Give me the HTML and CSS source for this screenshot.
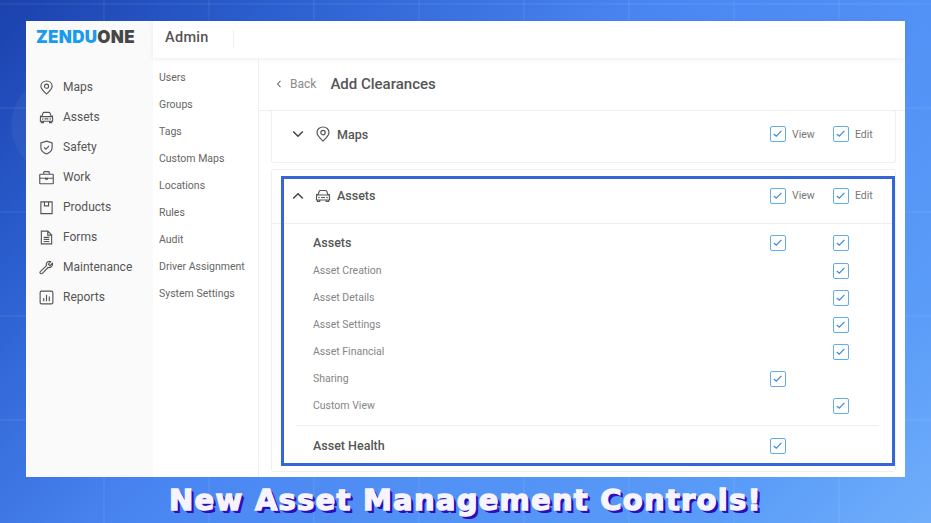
FILE: index.html
```html
<!DOCTYPE html>
<html lang="en">
<head>
<meta charset="utf-8">
<title>New Asset Management Controls</title>
<link rel="stylesheet" href="styles.css">
</head>
<body>
<svg class="defs" width="0" height="0" aria-hidden="true">
  <symbol id="chk" viewBox="0 0 16 16"><path d="M3.500 8.600 6.500 11.400 12.800 4.800" fill="none" stroke="#3a8ae0" stroke-width="1.500"/></symbol>
  <symbol id="pin" viewBox="0 0 16 16"><path d="M8 15C5.5 12.6 2 9.8 2 6.6 2 3.3 4.7 1 8 1s6 2.3 6 5.6C14 9.8 10.5 12.6 8 15Z" fill="none" stroke="#555" stroke-width="1.2"/><circle cx="8" cy="6.6" r="2.2" fill="none" stroke="#555" stroke-width="1.2"/></symbol>
  <symbol id="car" viewBox="0 0 16 16"><path d="M3 7 4.2 3.4C4.4 2.8 4.9 2.5 5.5 2.5h5c.6 0 1.1.3 1.3.9L13 7M2.6 7h10.8c.6 0 1.1.5 1.1 1.1V12h-13V8.1C1.500 7.500 2 7 2.600 7ZM2.500 12v1.500h2.200V12M11.300 12v1.500h2.200V12M1 6.500h1.500M13.500 6.500H15M6 9.500h4" fill="none" stroke="#555" stroke-width="1.200"/><circle cx="4" cy="9.500" r=".8" fill="#555"/><circle cx="12" cy="9.500" r=".8" fill="#555"/></symbol>
</svg>

<div class="app">
  <aside class="sidebar">
    <div class="logo"><span class="logo-blue">ZENDU</span><span class="logo-gray">ONE</span></div>
    <nav class="nav">
      <a class="nav-item"><svg class="nav-icon" viewBox="0 0 16 16"><use href="#pin"/></svg>Maps</a>
      <a class="nav-item"><svg class="nav-icon" viewBox="0 0 16 16"><use href="#car"/></svg>Assets</a>
      <a class="nav-item"><svg class="nav-icon" viewBox="0 0 16 16"><path d="M8 1.200 14 3.200V8c0 3.200-2.600 5.600-6 6.900C4.600 13.600 2 11.200 2 8V3.200Z" fill="none" stroke="#555" stroke-width="1.200"/><path d="M5.500 8 7.400 9.800 10.700 6.300" fill="none" stroke="#555" stroke-width="1.200"/></svg>Safety</a>
      <a class="nav-item"><svg class="nav-icon" viewBox="0 0 16 16"><path d="M1.500 4.500h13a.7.7 0 0 1 .7.700V14a.7.700 0 0 1-.7.700h-13a.7.700 0 0 1-.7-.700V5.200a.7.700 0 0 1 .7-.700ZM.8 8.800h14.400M5 4.500V2.600c0-.5.400-.9.900-.9h4.200c.5 0 .9.400.9.900v1.900M7 8v1.800h2V8" fill="none" stroke="#555" stroke-width="1.200"/></svg>Work</a>
      <a class="nav-item"><svg class="nav-icon" viewBox="0 0 16 16"><path d="M2 2h12v12.500H2ZM5.800 2v4.200h4.400V2" fill="none" stroke="#555" stroke-width="1.200"/></svg>Products</a>
      <a class="nav-item"><svg class="nav-icon" viewBox="0 0 16 16"><path d="M2.500 1.200h7L13.500 5.200v9.600h-11ZM9.300 1.200v4.200h4.200M5 7.800h6M5 10h6M5 12.200h6" fill="none" stroke="#555" stroke-width="1.200"/></svg>Forms</a>
      <a class="nav-item"><svg class="nav-icon" viewBox="0 0 16 16"><path d="M14.300 3.500 11.600 6 10 4.400 12.500 1.800C10.500 1 8.200 2 7.800 4.100c-.1.700-.1 1.300.2 1.900L1.600 12.100c-.7.700-.7 1.500-.1 2.100.6.600 1.400.6 2.100 0L9.700 8c2.500.7 5.300-1.400 4.600-4.500Z" fill="none" stroke="#555" stroke-width="1.200"/></svg>Maintenance</a>
      <a class="nav-item"><svg class="nav-icon" viewBox="0 0 16 16"><rect x="1.200" y="1.200" width="13.600" height="13.600" rx="1.500" fill="none" stroke="#555" stroke-width="1.200"/><path d="M5 8.500v3.500M8 5v7M11 7v5" stroke="#555" stroke-width="1.200"/></svg>Reports</a>
    </nav>
  </aside>

  <div class="content">
    <header class="topbar">
      <span class="topbar-title">Admin</span>
      <span class="topbar-sep"></span>
    </header>
    <div class="panes">
      <nav class="subnav">
        <a>Users</a><a>Groups</a><a>Tags</a><a>Custom Maps</a><a>Locations</a><a>Rules</a><a>Audit</a><a>Driver Assignment</a><a>System Settings</a>
      </nav>
      <main class="main">
        <div class="page-head">
          <svg class="back-icon" viewBox="0 0 8 10"><path d="M5.500 1.800 2.500 5 5.500 8.200" fill="none" stroke="#777" stroke-width="1.100"/></svg>
          <span class="back">Back</span>
          <h1 class="page-title">Add Clearances</h1>
        </div>
        <div class="cards">
          <section class="card card-maps">
            <div class="group-head">
              <div class="group-name">
                <svg class="chev" viewBox="0 0 12 8"><path d="M1.200 1.500 6 6.300 10.800 1.500" fill="none" stroke="#444" stroke-width="1.500"/></svg>
                <svg class="group-icon" viewBox="0 0 16 16"><use href="#pin"/></svg>
                <span>Maps</span>
              </div>
              <label class="perm"><span class="box"><svg viewBox="0 0 16 16"><use href="#chk"/></svg></span>View</label>
              <label class="perm"><span class="box"><svg viewBox="0 0 16 16"><use href="#chk"/></svg></span>Edit</label>
            </div>
          </section>

          <section class="card card-assets">
            <div class="group-head group-head-line">
              <div class="group-name">
                <svg class="chev" viewBox="0 0 12 8"><path d="M1.200 6.500 6 1.700 10.800 6.500" fill="none" stroke="#444" stroke-width="1.500"/></svg>
                <svg class="group-icon" viewBox="0 0 16 16"><use href="#car"/></svg>
                <span>Assets</span>
              </div>
              <label class="perm"><span class="box"><svg viewBox="0 0 16 16"><use href="#chk"/></svg></span>View</label>
              <label class="perm"><span class="box"><svg viewBox="0 0 16 16"><use href="#chk"/></svg></span>Edit</label>
            </div>
            <div class="rows">
              <div class="row row-main row-first"><span>Assets</span><span class="box"><svg viewBox="0 0 16 16"><use href="#chk"/></svg></span><span class="box"><svg viewBox="0 0 16 16"><use href="#chk"/></svg></span></div>
              <div class="row"><span>Asset Creation</span><i></i><span class="box"><svg viewBox="0 0 16 16"><use href="#chk"/></svg></span></div>
              <div class="row"><span>Asset Details</span><i></i><span class="box"><svg viewBox="0 0 16 16"><use href="#chk"/></svg></span></div>
              <div class="row"><span>Asset Settings</span><i></i><span class="box"><svg viewBox="0 0 16 16"><use href="#chk"/></svg></span></div>
              <div class="row"><span>Asset Financial</span><i></i><span class="box"><svg viewBox="0 0 16 16"><use href="#chk"/></svg></span></div>
              <div class="row"><span>Sharing</span><span class="box"><svg viewBox="0 0 16 16"><use href="#chk"/></svg></span><i></i></div>
              <div class="row"><span>Custom View</span><i></i><span class="box"><svg viewBox="0 0 16 16"><use href="#chk"/></svg></span></div>
              <div class="rows-line"></div>
              <div class="row row-main"><span>Asset Health</span><span class="box"><svg viewBox="0 0 16 16"><use href="#chk"/></svg></span><i></i></div>
            </div>
            <div class="highlight"></div>
          </section>
        </div>
      </main>
    </div>
  </div>
</div>

<div class="caption">New Asset Management Controls!</div>
</body>
</html>
```

FILE: styles.css
```css
* { box-sizing: border-box; }
html, body { margin: 0; height: 100%; }
body {
  width: 931px;
  height: 523px;
  overflow: hidden;
  font-family: Roboto, "Liberation Sans", sans-serif;
  color: #555;
  padding: 21px 26px 0;
  background:
    radial-gradient(circle at 62px 125px, rgba(255,255,255,.045) 0 50px, transparent 51px),
    repeating-linear-gradient(90deg, transparent 0 103px, rgba(255,255,255,.05) 103px 105px),
    repeating-linear-gradient(0deg, transparent 0 102px, rgba(255,255,255,.05) 102px 104px),
    linear-gradient(135deg, #1b41ad 0%, #2c60d0 20%, #4a86f2 45%, #5a9cf8 85%, #70aefb 100%);
}
.defs { position: absolute; }
.app { display: flex; width: 879px; height: 456px; background: #fff; }

.sidebar { width: 127px; flex: none; background: #fafafa; padding-left: 11px; }
.logo {
  height: 37px;
  display: flex;
  align-items: center;
  padding-bottom: 4px;
  margin-left: -1px;
  font-family: Inter, "Liberation Sans", sans-serif;
  font-weight: 900;
  font-size: 17px;
  letter-spacing: .3px;
  line-height: 1;
}
.logo-blue { color: #1b9bf0; }
.logo-gray { color: #474747; }
.nav { margin-top: 14px; display: flex; flex-direction: column; }
.nav-item {
  height: 30px;
  display: flex;
  align-items: center;
  gap: 9px;
  margin-left: 2px;
  font-size: 12px;
  color: #555;
}
.nav-icon { width: 15px; height: 15px; flex: none; }

.content { flex: 1; display: flex; flex-direction: column; min-width: 0; }
.topbar {
  height: 37px;
  flex: none;
  display: flex;
  align-items: center;
  padding-left: 12px;
  background: #fff;
  box-shadow: 0 1px 5px rgba(0,0,0,.07);
  position: relative;
}
.topbar-title { font-size: 14.500px; font-weight: 500; color: #555; letter-spacing: .3px; margin-bottom: 5px; }
.topbar-sep { width: 1px; height: 18px; background: #eee; margin: 0 0 1px 24px; }

.panes { flex: 1; display: flex; min-height: 0; }
.subnav {
  width: 106px;
  flex: none;
  padding: 6px 0 0 6px;
  border-right: 1px solid #f0f0f0;
  display: flex;
  flex-direction: column;
}
.subnav a { height: 27px; line-height: 27px; font-size: 10.500px; color: #666; }

.main { flex: 1; min-width: 0; overflow: hidden; }
.page-head {
  height: 53px;
  display: flex;
  align-items: center;
  padding-left: 16px;
  border-bottom: 1px solid #eee;
}
.back-icon { width: 8px; height: 10px; margin-right: 7px; }
.back { font-size: 12px; color: #8a8a8a; margin-right: 14px; }
.page-title { margin: 0; font-size: 15px; font-weight: 500; color: #555; }

.cards { padding: 0 9px 0 12px; display: flex; flex-direction: column; gap: 6px; }
.card { border: 1px solid #f0f0f0; border-top: 0; border-radius: 0 0 3px 3px; }
.card-maps { height: 52px; }
.card-assets { height: 303px; position: relative; border-top: 1px solid #f0f0f0; border-radius: 3px; }
.group-head {
  display: grid;
  grid-template-columns: 1fr 63px 62px;
  height: 46px;
  align-items: center;
  padding-left: 20px;
}
.card-assets .group-head { height: 54px; padding-bottom: 2px; }
.group-head-line { border-bottom: 1px solid #eee; }
.group-name { display: flex; align-items: center; font-size: 12.500px; font-weight: 500; color: #555; }
.chev { width: 12px; height: 8px; margin-right: 11px; }
.group-icon { width: 16px; height: 16px; margin-right: 6px; }
.perm { display: flex; align-items: center; gap: 6px; font-size: 10.500px; color: #777; }

.box {
  width: 16px;
  height: 16px;
  display: block;
  border: 1.500px solid #62abee;
  border-radius: 2px;
  background: #fff;
  flex: none;
}
.box svg { display: block; width: 13px; height: 13px; }

.rows { padding: 5px 0 0 41px; }
.row {
  height: 27px;
  display: grid;
  grid-template-columns: 1fr 63px 62px;
  align-items: center;
  font-size: 10.500px;
  color: #858585;
}
.row-main { font-size: 12.500px; font-weight: 500; color: #555; }
.row-first { height: 28px; padding-bottom: 1px; }
.rows-line { height: 1px; background: #f0f0f0; margin: 6px 16px 6px -17px; }
.highlight {
  position: absolute;
  left: 9px;
  right: 0;
  top: 6px;
  height: 290px;
  border: 3px solid #3566d6;
  pointer-events: none;
}

.caption {
  height: 46px;
  line-height: 46px;
  text-align: center;
  font-family: "DejaVu Sans", "Liberation Sans", sans-serif;
  font-weight: 700;
  font-size: 29px;
  letter-spacing: 1.25px;
  color: #f6f4ff;
  -webkit-text-stroke: 1.4px #f6f4ff;
  text-shadow: 1px 1px 0 #2a10b8, 2px 2px 0 #2a10b8, 3px 3px 0 #2a10b8;
  margin: 0 -26px;
}
```
